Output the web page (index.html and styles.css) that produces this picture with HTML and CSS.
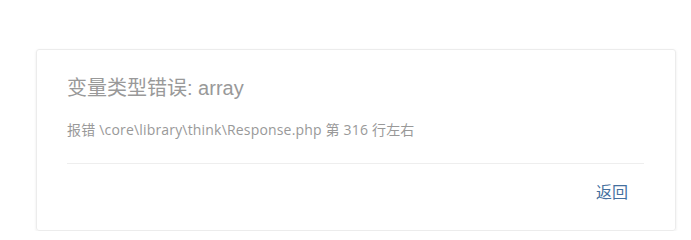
FILE: index.html
```html
<!DOCTYPE html>
<html lang="zh-CN">
<head>
<meta charset="utf-8">
<title>错误</title>
<link rel="stylesheet" href="styles.css">
</head>
<body>
<div class="wrap">
  <div class="card">
    <div class="body">
      <h1 class="title">变量类型错误: array</h1>
      <p class="msg">报错 \core\library\think\Response.php 第 316 行左右</p>
    </div>
    <div class="footer">
      <a class="back" href="#">返回</a>
    </div>
  </div>
</div>
</body>
</html>
```
FILE: styles.css
```css
html, body {
  margin: 0;
  padding: 0;
  background: #fff;
  font-family: "Liberation Sans", "Noto Sans CJK SC", sans-serif;
}
.wrap {
  padding: 49px 15px 0 36px;
}
.card {
  border: 1px solid #ececec;
  border-radius: 3px;
  box-shadow: 0 1px 3px rgba(0,0,0,0.08);
  height: 182px;
  box-sizing: border-box;
  padding: 0 31px 0 30px;
}
.body {
  border-bottom: 1px solid #eeeeee;
  padding: 23px 0 23px;
}
.title {
  margin: 0;
  font-size: 20px;
  font-weight: normal;
  line-height: 30px;
  color: #999;
}
.msg {
  margin: 17px 0 0;
  font-family: "Open Sans", "Noto Sans CJK SC", sans-serif;
  font-size: 14px;
  line-height: 20px;
  letter-spacing: 0.18px;
  color: #999;
}
.footer {
  display: flex;
  justify-content: flex-end;
  padding: 17px 16px 0 0;
}
.back {
  font-size: 16px;
  line-height: 24px;
  color: #44709e;
  text-decoration: none;
}
```
